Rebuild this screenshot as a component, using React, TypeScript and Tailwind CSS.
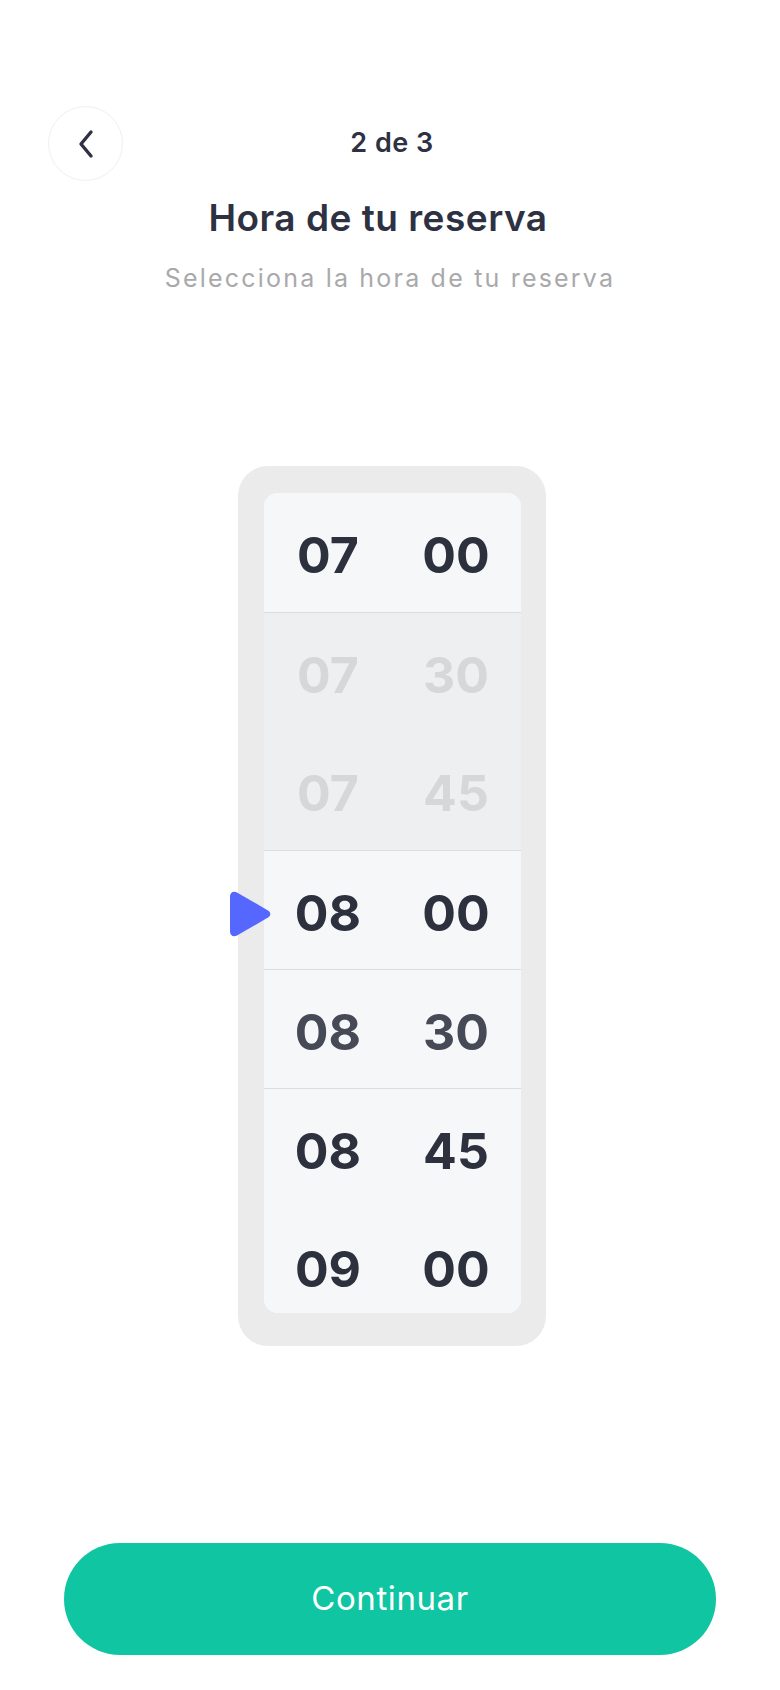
import { useState } from 'react';

type Slot = { h: string; m: string; tone: 'dark' | 'mid' | 'faded'; shade: boolean; line: boolean };

const slots: Slot[] = [
  { h: '07', m: '00', tone: 'dark', shade: false, line: false },
  { h: '07', m: '30', tone: 'faded', shade: true, line: true },
  { h: '07', m: '45', tone: 'faded', shade: true, line: false },
  { h: '08', m: '00', tone: 'dark', shade: false, line: true },
  { h: '08', m: '30', tone: 'mid', shade: false, line: true },
  { h: '08', m: '45', tone: 'dark', shade: false, line: true },
  { h: '09', m: '00', tone: 'dark', shade: false, line: false },
];

const toneClass: Record<Slot['tone'], string> = {
  dark: 'text-[#2d303d]',
  mid: 'text-[#464956]',
  faded: 'text-[#d5d7d9]',
};

function BackButton() {
  return (
    <button className="w-[75px] h-[75px] rounded-full border border-[#efefef] bg-white flex items-center justify-center">
      <svg width="18" height="30" viewBox="0 0 18 30" fill="none">
        <path d="M14 3L4 15l10 12" stroke="#2d3142" strokeWidth="3.4" strokeLinecap="round" strokeLinejoin="round" />
      </svg>
    </button>
  );
}

function TimePicker() {
  const [selected] = useState(3);

  return (
    <div className="relative ml-[238px] w-[308px] bg-[#ebebeb] rounded-[30px] pl-[26px] pr-[25px] pt-[27px] pb-[33px]">
      <div className="h-[820px] overflow-hidden rounded-[14px] bg-[#f6f7f9]">
        {slots.map((s, i) => (
          <div
            key={i}
            className={`h-[119px] shrink-0 flex items-center pt-[5px] font-['Inter',sans-serif] font-bold text-[50px] leading-none ${
              s.shade ? 'bg-[#eeeff1]' : 'bg-[#f6f7f9]'
            } ${s.line ? 'border-t border-[#dcdde0]' : ''} ${toneClass[s.tone]} ${i === selected ? 'selected' : ''}`}
          >
            <span className="w-[128px] text-center">{s.h}</span>
            <span className="w-[128px] text-center">{s.m}</span>
          </div>
        ))}
      </div>
      <svg className="absolute left-[-9px] top-[424px]" width="42" height="48" viewBox="0 0 42 48">
        <path d="M1 6.5C1 2.5 4.5 0.5 8 2.5l31 18c3 1.8 3 5.2 0 7L8 45.5C4.5 47.5 1 45.5 1 41.5z" fill="#5567fe" />
      </svg>
    </div>
  );
}

export default function App() {
  return (
    <div className="w-[780px] h-[1690px] bg-white flex flex-col font-['Inter',sans-serif]">
      <div className="pt-[106px] grid grid-cols-[1fr_auto_1fr] items-center">
        <div className="pl-[48px]">
          <BackButton />
        </div>
        <div className="text-[27px] font-semibold tracking-[0.5px] text-[#2d3142] pl-[4px]">2 de 3</div>
        <div />
      </div>

      <h1 className="mt-[11px] text-center text-[37px] font-semibold tracking-[0.5px] text-[#2d3142] leading-[52px] pr-[24px]">
        Hora de tu reserva
      </h1>
      <p className="mt-[18px] text-center text-[25px] tracking-[2.2px] text-[#a9a9ab] leading-[32px]">
        Selecciona la hora de tu reserva
      </p>

      <div className="mt-[172px]">
        <TimePicker />
      </div>

      <div className="mt-auto mb-[35px] px-[64px]">
        <button className="w-full h-[112px] rounded-full bg-[#10c5a2] text-white text-[33px] tracking-[0.6px] font-normal">
          Continuar
        </button>
      </div>
    </div>
  );
}
